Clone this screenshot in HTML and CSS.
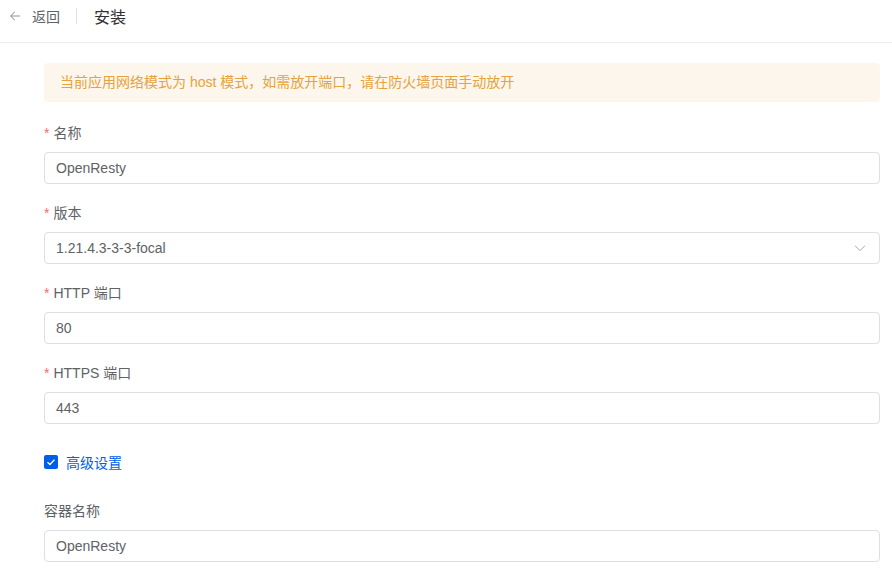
FILE: index.html
```html
<!DOCTYPE html>
<html lang="zh-CN">
<head>
    <meta charset="UTF-8">
    <meta name="viewport" content="width=device-width, initial-scale=1.0">
    <title>安装</title>
    <link rel="stylesheet" href="styles.css">
</head>
<body>
    <div class="page-header">
        <div class="back">
            <svg class="back-icon" viewBox="0 0 1024 1024" width="14" height="14">
                <path fill="currentColor" d="M224 480h640a32 32 0 1 1 0 64H224a32 32 0 0 1 0-64z"/>
                <path fill="currentColor" d="m237.248 512 265.408 265.344a32 32 0 0 1-45.312 45.312l-288-288a32 32 0 0 1 0-45.312l288-288a32 32 0 1 1 45.312 45.312L237.248 512z"/>
            </svg>
            <span>返回</span>
        </div>
        <div class="divider"></div>
        <div class="title">安装</div>
    </div>

    <div class="content">
        <div class="alert">当前应用网络模式为 host 模式，如需放开端口，请在防火墙页面手动放开</div>

        <div class="form-item">
            <label class="required">名称</label>
            <div class="input">OpenResty</div>
        </div>

        <div class="form-item">
            <label class="required">版本</label>
            <div class="input select">
                <span>1.21.4.3-3-3-focal</span>
                <svg class="arrow" viewBox="0 0 1024 1024" width="14" height="14">
                    <path fill="currentColor" d="M831.872 340.864 512 652.672 192.128 340.864a30.592 30.592 0 0 0-42.752 0 29.120 29.120 0 0 0 0 41.6L489.664 714.24a32 32 0 0 0 44.672 0l340.288-331.712a29.12 29.12 0 0 0 0-41.728 30.592 30.592 0 0 0-42.752 0z"/>
                </svg>
            </div>
        </div>

        <div class="form-item">
            <label class="required">HTTP 端口</label>
            <div class="input">80</div>
        </div>

        <div class="form-item">
            <label class="required">HTTPS 端口</label>
            <div class="input">443</div>
        </div>

        <div class="form-item checkbox-row">
            <span class="checkbox">
                <svg viewBox="0 0 14 14" width="14" height="14">
                    <path d="M3.5 7.2 6 9.5 10.5 4.6" fill="none" stroke="#fff" stroke-width="1.4"/>
                </svg>
            </span>
            <span class="checkbox-label">高级设置</span>
        </div>

        <div class="form-item">
            <label>容器名称</label>
            <div class="input">OpenResty</div>
        </div>
    </div>
</body>
</html>
```

FILE: styles.css
```css
body {
    margin: 0;
    font-family: "Liberation Sans", "Noto Sans CJK SC", sans-serif;
    font-size: 14px;
    color: #606266;
    background-color: #fff;
}
.page-header {
    display: flex;
    align-items: center;
    height: 32px;
    padding: 0 8px 10px;
    border-bottom: 1px solid #ebeef5;
}
.back {
    display: flex;
    align-items: center;
    gap: 10px;
    color: #606266;
}
.back-icon {
    color: #909399;
}
.divider {
    width: 1px;
    height: 16px;
    background-color: #dcdfe6;
    margin: 0 17px 0 16px;
}
.title {
    font-size: 16px;
    color: #303133;
}
.content {
    padding: 20px 12px 0 44px;
}
.alert {
    background-color: #fdf6ec;
    color: #e6a23c;
    border-radius: 4px;
    height: 39px;
    line-height: 39px;
    padding: 0 16px;
    margin-bottom: 20px;
}
.form-item {
    margin-bottom: 18px;
}
.form-item label {
    display: block;
    line-height: 22px;
    margin-bottom: 8px;
}
.required::before {
    content: "*";
    color: #f56c6c;
    margin-right: 4px;
}
.input {
    box-sizing: border-box;
    height: 32px;
    line-height: 30px;
    border: 1px solid #dcdfe6;
    border-radius: 4px;
    padding: 0 11px;
}
.select {
    display: flex;
    align-items: center;
    justify-content: space-between;
}
.arrow {
    color: #a8abb2;
    margin-right: 1px;
}
.checkbox-row {
    display: flex;
    align-items: center;
    height: 40px;
}
.checkbox {
    display: flex;
    width: 14px;
    height: 14px;
    background-color: #005eeb;
    border-radius: 2px;
    margin-right: 8px;
}
.checkbox-label {
    color: #005eeb;
}
```
